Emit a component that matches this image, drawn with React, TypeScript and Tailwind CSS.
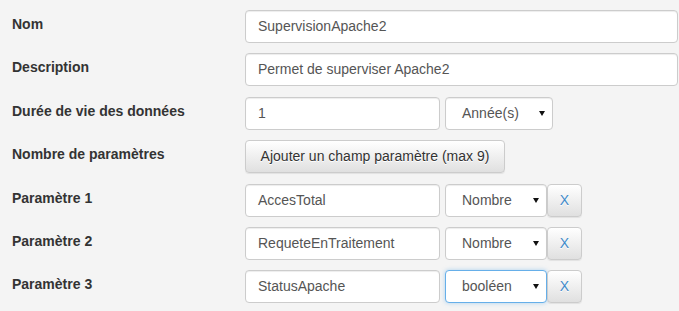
import React from "react";

const inputCls =
  "h-[33px] rounded-[4px] border border-[#cccccc] bg-white pl-[12px] flex items-center text-[14px] text-[#555555] shadow-[inset_0_1px_1px_rgba(0,0,0,0.075)]";

const btnCls =
  "h-[33px] rounded-[4px] border border-[#cccccc] bg-gradient-to-b from-white to-[#e0e0e0] flex items-center text-[14px] shadow-[0_1px_1px_rgba(0,0,0,0.075)] [text-shadow:0_1px_0_#fff]";

function Caret() {
  return (
    <svg width="6" height="5" viewBox="0 0 6 5" className="shrink-0">
      <path d="M0 0 L6 0 L3 5 Z" fill="#111" />
    </svg>
  );
}

function Select({
  value,
  width,
  focused,
}: {
  value: string;
  width: string;
  focused?: boolean;
}) {
  return (
    <div
      className={
        "h-[33px] rounded-[4px] border bg-white pl-[16px] pr-[7px] flex items-center justify-between text-[14px] text-[#555555] " +
        width +
        (focused
          ? " border-[#66afe9] shadow-[0_0_4px_rgba(102,175,233,0.5)]"
          : " border-[#cccccc] shadow-[inset_0_1px_1px_rgba(0,0,0,0.075)]")
      }
    >
      <span>{value}</span>
      <Caret />
    </div>
  );
}

function Row({
  label,
  children,
  mt,
}: {
  label: string;
  children: React.ReactNode;
  mt: string;
}) {
  return (
    <div className={"flex " + mt}>
      <div className="w-[245px] shrink-0 pl-[12px] pt-[4px] text-[14px] font-bold leading-5 text-[#333333]">
        {label}
      </div>
      <div className="flex">{children}</div>
    </div>
  );
}

function ParamRow({
  n,
  name,
  type,
  focused,
  mt,
}: {
  n: number;
  name: string;
  type: string;
  focused?: boolean;
  mt: string;
}) {
  return (
    <Row label={`Paramètre ${n}`} mt={mt}>
      <div className={inputCls + " w-[195px]"}>{name}</div>
      <div className="ml-[5px]">
        <Select value={type} width="w-[102px]" focused={focused} />
      </div>
      <div className={btnCls + " w-[35px] justify-center text-[#428bca]"}>X</div>
    </Row>
  );
}

export default function App() {
  return (
    <div
      className="w-[679px] h-[311px] bg-[#f4f4f4] pt-[10px] overflow-hidden"
      style={{ fontFamily: '"Liberation Sans", Arial, sans-serif' }}
    >
      <Row label="Nom" mt="mt-0">
        <div className={inputCls + " w-[433px]"}>SupervisionApache2</div>
      </Row>
      <Row label="Description" mt="mt-[10px]">
        <div className={inputCls + " w-[433px]"}>Permet de superviser Apache2</div>
      </Row>
      <Row label="Durée de vie des données" mt="mt-[11px]">
        <div className={inputCls + " w-[195px]"}>1</div>
        <div className="ml-[5px]">
          <Select value="Année(s)" width="w-[108px]" />
        </div>
      </Row>
      <Row label="Nombre de paramètres" mt="mt-[10px]">
        <div className={btnCls + " w-[260px] justify-center text-[#333333]"}>
          Ajouter un champ paramètre (max 9)
        </div>
      </Row>
      <ParamRow n={1} name="AccesTotal" type="Nombre" mt="mt-[11px]" />
      <ParamRow n={2} name="RequeteEnTraitement" type="Nombre" mt="mt-[10px]" />
      <ParamRow n={3} name="StatusApache" type="booléen" focused mt="mt-[10px]" />
    </div>
  );
}
